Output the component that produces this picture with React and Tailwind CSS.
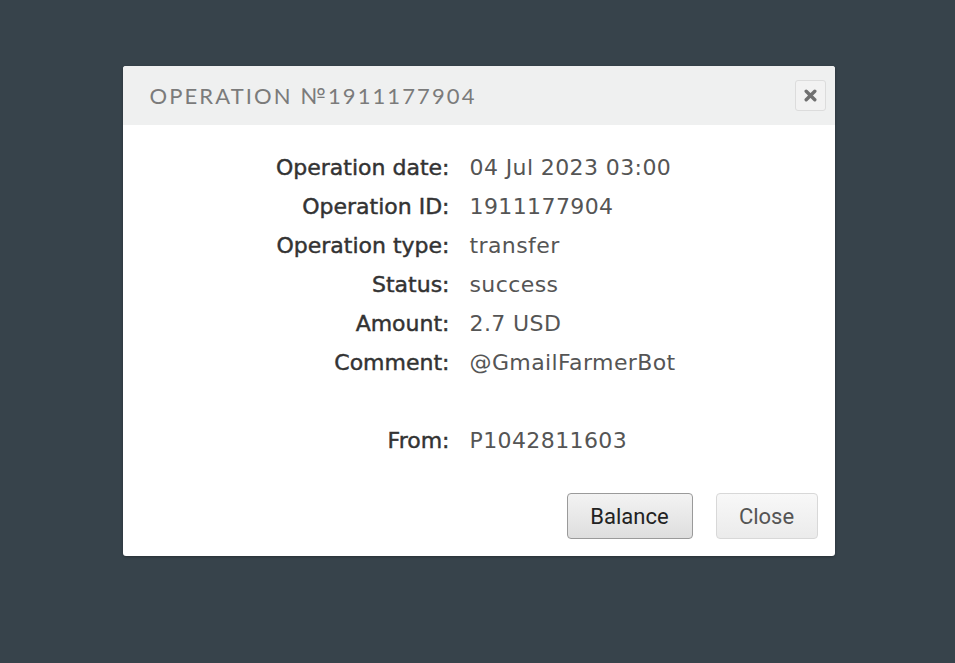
const rows = [
    { label: 'Operation date:', value: '04 Jul 2023 03:00' },
    { label: 'Operation ID:', value: '1911177904' },
    { label: 'Operation type:', value: 'transfer' },
    { label: 'Status:', value: 'success' },
    { label: 'Amount:', value: '2.7 USD' },
    { label: 'Comment:', value: '@GmailFarmerBot' },
    { label: '', value: '' },
    { label: 'From:', value: 'P1042811603' },
];

const App = () => {
    return (
        <div className="min-h-screen w-full bg-[#37434b] flex justify-center pt-[66px] pl-[2px]">
            <div className="w-[712px] h-[490px] bg-white rounded-[3px] flex flex-col overflow-hidden shadow-[0_1px_3px_rgba(0,0,0,0.3)]">
                {/* Header */}
                <div className="h-[59px] shrink-0 bg-[#eff0f0] flex items-center justify-between pl-[27px] pr-[9px]">
                    <h1 className="text-[22px] tracking-[2.1px] text-[#7b7b7b] font-['Lato',sans-serif] leading-none">
                        OPERATION №1911177904
                    </h1>
                    <button className="w-[31px] h-[31px] rounded-[3px] border border-[#dcdcdc] bg-[#f2f2f2] flex items-center justify-center">
                        <svg width="13" height="13" viewBox="0 0 13 13">
                            <path d="M2.2 2.2 L10.8 10.8 M10.8 2.2 L2.2 10.8" stroke="#707070" strokeWidth="3.4" strokeLinecap="round" />
                        </svg>
                    </button>
                </div>

                {/* Details */}
                <div className="pt-[23px] flex flex-col font-['DejaVu_Sans',sans-serif] text-[22px]">
                    {rows.map((row, i) => (
                        <div key={i} className="flex h-[39px] items-center">
                            <div className="w-[327px] text-right text-[#333] [-webkit-text-stroke:0.45px_#333]">{row.label}</div>
                            <div className="pl-[20px] tracking-[0.4px] text-[#555]">{row.value}</div>
                        </div>
                    ))}
                </div>

                {/* Actions */}
                <div className="mt-auto flex justify-end gap-[23px] pr-[17px] pb-[17px] font-['Roboto',sans-serif] text-[22px]">
                    <button className="w-[126px] h-[46px] rounded-[4px] border border-[#9a9a9a] bg-gradient-to-b from-[#f3f3f3] to-[#dedede] text-[#222]">
                        Balance
                    </button>
                    <button className="w-[102px] h-[46px] rounded-[4px] border border-[#d8d8d8] bg-gradient-to-b from-[#f8f8f8] to-[#ebebeb] text-[#555]">
                        Close
                    </button>
                </div>
            </div>
        </div>
    );
};

export default App;
